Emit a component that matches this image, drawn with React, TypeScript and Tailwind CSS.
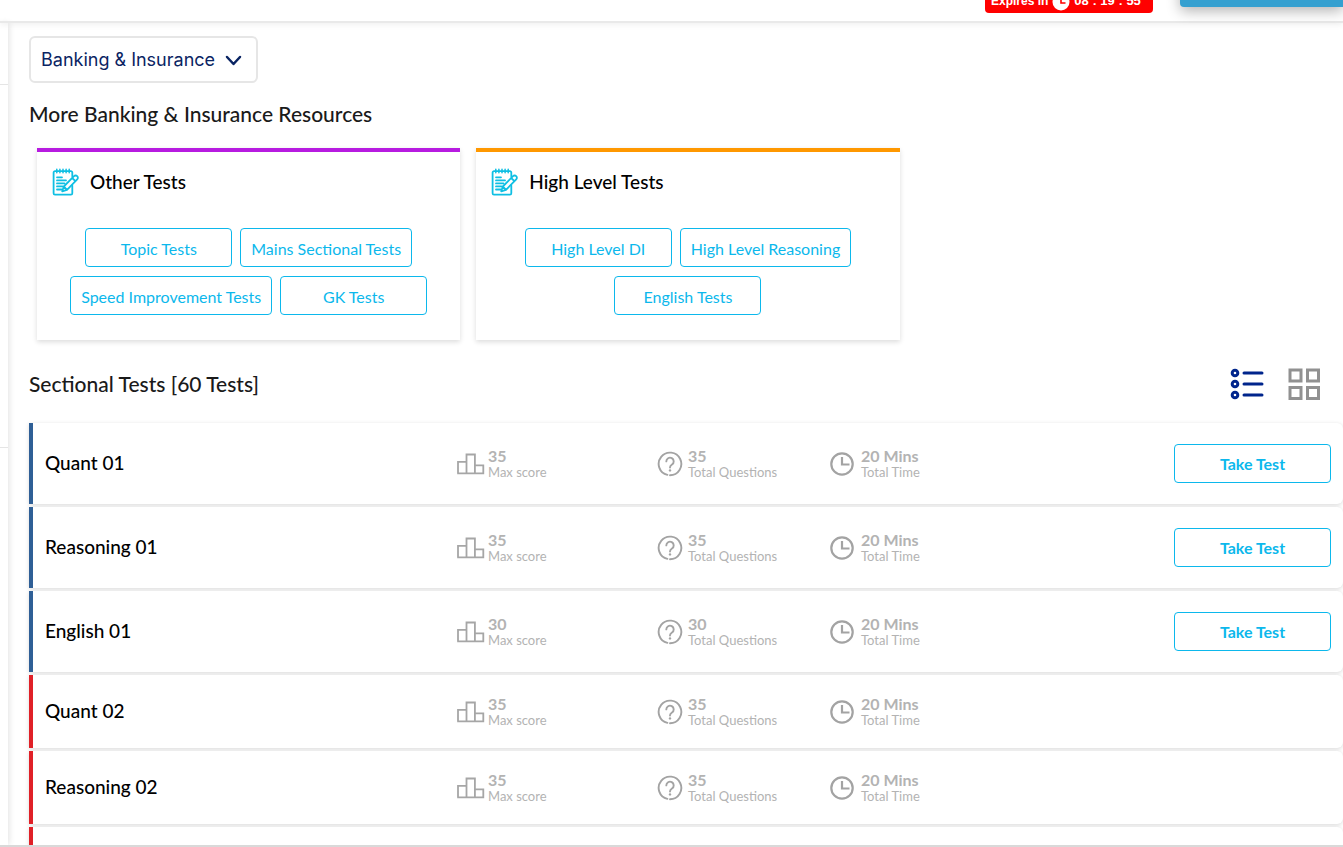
import { useState } from "react";

type Test = {
  title: string;
  score: number;
  questions: number;
  mins: number;
  open: boolean;
};

const resources = [
  {
    title: "Other Tests",
    border: "border-[#b71be0]",
    links: ["Topic Tests", "Mains Sectional Tests", "Speed Improvement Tests", "GK Tests"],
  },
  {
    title: "High Level Tests",
    border: "border-[#ff9800]",
    links: ["High Level DI", "High Level Reasoning", "English Tests"],
  },
];

const tests: Test[] = [
  { title: "Quant 01", score: 35, questions: 35, mins: 20, open: true },
  { title: "Reasoning 01", score: 35, questions: 35, mins: 20, open: true },
  { title: "English 01", score: 30, questions: 30, mins: 20, open: true },
  { title: "Quant 02", score: 35, questions: 35, mins: 20, open: false },
  { title: "Reasoning 02", score: 35, questions: 35, mins: 20, open: false },
];

const NotepadIcon = () => (
  <svg width="28" height="28" viewBox="0 0 28 28" fill="none" stroke="#0fbfe3" strokeWidth="1.8" strokeLinecap="round" strokeLinejoin="round">
    <path d="M20.3 8.5V4.6a1.4 1.4 0 0 0-1.4-1.4H3a1.4 1.4 0 0 0-1.4 1.4v20.6A1.4 1.4 0 0 0 3 26.6h15.9a1.4 1.4 0 0 0 1.4-1.400V17.5" />
    <path d="M4.8 1.2v3.6M7.9 1.2v3.6M11 1.2v3.6M14.1 1.2v3.6M17.2 1.2v3.6" strokeWidth="1.5" />
    <path d="M5 9.3h5M5 12.4h9M5 15.4h7.5M5 18.400h5.5M5 21.5h4.5" />
    <path d="M11.8 18.5 22 8.2a2.2 2.2 0 0 1 3.2 0 2.2 2.2 0 0 1 0 3.2L15 21.8l-4.8 1.5zM20.2 10l3.2 3.2M11.8 18.5l3.2 3.3" />
  </svg>
);

const ScoreIcon = () => (
  <svg width="28" height="22" viewBox="0 0 28 22" fill="none" stroke="#a6a6a6" strokeWidth="1.8">
    <path d="M1 20.3V8.8h8.5M9.5 20.3V1.5h8.4v18.8M17.9 12.3h8.4v8M.2 20.3h27" />
  </svg>
);

const QuestionIcon = () => (
  <svg width="26" height="26" viewBox="0 0 26 26" fill="none" stroke="#a3a3a3" strokeWidth="1.9" strokeLinecap="round">
    <path d="M10.4 23.9A11.3 11.3 0 1 1 13 24.2" />
    <path d="M9.3 10.4a3.7 3.7 0 1 1 5.7 3.1c-1.4.9-2 1.5-2 3" />
    <circle cx="13" cy="19.4" r="1.2" fill="#a3a3a3" stroke="none" />
  </svg>
);

const ClockIcon = () => (
  <svg width="24" height="24" viewBox="0 0 24 24" fill="none" stroke="#a3a3a3" strokeWidth="2.2">
    <circle cx="12" cy="12" r="10.7" />
    <path d="M12 5v7.500h7.500" />
  </svg>
);

const Stat = ({ icon, value, label }: { icon: React.ReactNode; value: string; label: string }) => (
  <div className="flex items-center">
    <span className="w-[31px] shrink-0 flex items-center">{icon}</span>
    <div className="text-[#b3b3b3]">
      <div className="text-base leading-4 font-bold">{value}</div>
      <div className="text-[13px] leading-4">{label}</div>
    </div>
  </div>
);

const TestRow = ({ test }: { test: Test }) => (
  <li
    className={`grid grid-cols-[412fr_200fr_173fr_344fr_157px] items-center rounded-r-md border-l-4 bg-white px-3 shadow-[0_1px_4px_rgba(0,0,0,0.15)] ${test.open ? "border-[#2f5f96] py-[21px]" : "border-[#e02027] h-[73px]"}`}
  >
    <h3 className="pb-0.5 text-[19px] leading-6 font-medium text-black">{test.title}</h3>
    <Stat icon={<ScoreIcon />} value={`${test.score}`} label="Max score" />
    <Stat icon={<QuestionIcon />} value={`${test.questions}`} label="Total Questions" />
    <Stat icon={<ClockIcon />} value={`${test.mins} Mins`} label="Total Time" />
    {test.open && (
      <button className="h-[39px] rounded-sm border border-[#0cb8ec] text-base font-bold text-[#0cb8ec]">
        Take Test
      </button>
    )}
  </li>
);

const App = () => {
  const [view, setView] = useState("list");

  return (
    <div className="flex h-screen flex-col overflow-hidden border-b-2 border-[#d9d9d9] bg-white font-['Lato',sans-serif]">
      <header className="z-10 flex h-[23px] shrink-0 items-end justify-end border-b-2 border-[#e9e9e9] shadow-[0_2px_6px_rgba(0,0,0,0.06)]">
        <div className="mb-2 mr-[27px] flex h-8 w-[168px] items-end gap-1 whitespace-nowrap rounded-sm bg-[#ff0000] px-[6px] pb-1 font-['Liberation_Sans',sans-serif] text-[13px] font-bold leading-4 text-white">
          <span className="text-xs leading-4">Expires in</span>
          <svg width="18" height="18" viewBox="0 0 18 18" className="-mb-0.5 shrink-0">
            <circle cx="9" cy="9" r="8.5" fill="white" />
            <path d="M9 4v6h4.5" fill="none" stroke="#ff0000" strokeWidth="1.6" />
          </svg>
          <span>08 : 19 : 55</span>
        </div>
        <button aria-label="Upgrade" className="mb-[14px] h-10 w-[163px] rounded-bl-sm bg-[#35a0d0] shadow-[0_4px_14px_rgba(0,0,0,0.3)]" />
      </header>

      <div className="flex min-h-0 flex-1">
        <aside className="w-2 shrink-0 shadow-[1px_0_6px_rgba(0,0,0,0.12)]">
          <div className="h-[62px] border-b border-[#e5e5e5]" />
          <div className="h-[363px] border-b border-[#e5e5e5]" />
        </aside>

        <main className="min-w-0 flex-1 pl-[21px] pt-[13px]">
          <div className="relative w-fit">
            <select
              aria-label="Exam category"
              className="h-[47px] w-[229px] appearance-none rounded-md border-2 border-[#e6e6e6] bg-white pl-[10px] font-['Inter',sans-serif] text-lg text-[#0a2463]"
            >
              <option>Banking &amp; Insurance</option>
            </select>
            <svg className="pointer-events-none absolute right-4 top-[19px]" width="17" height="12" viewBox="0 0 17 12" fill="none" stroke="#0a2463" strokeWidth="2.5" strokeLinecap="round" strokeLinejoin="round">
              <path d="m2 2 6.5 7L15 2" />
            </svg>
          </div>

          <h2 className="mt-[17px] text-[21px] leading-7 font-medium text-[#1a1a1a]">
            More Banking &amp; Insurance Resources
          </h2>

          <div className="mt-5 grid grid-cols-3 gap-4 pl-2 pr-1">
            {resources.map((item) => (
              <section key={item.title} className={`border-t-4 bg-white pb-[25px] pt-4 shadow-[0_2px_5px_rgba(0,0,0,0.14)] ${item.border}`}>
                <div className="flex items-center gap-[10px] px-[15px]">
                  <NotepadIcon />
                  <h3 className="text-[19px] leading-7 font-medium text-black">{item.title}</h3>
                </div>
                <div className="mt-8 flex flex-wrap justify-center gap-x-2 gap-y-[9px] px-4">
                  {item.links.map((link) => (
                    <button key={link} className="h-[39px] min-w-[147px] rounded-sm border border-[#0cb8ec] px-[10px] pt-0.5 text-base text-[#0cb8ec]">
                      {link}
                    </button>
                  ))}
                </div>
              </section>
            ))}
          </div>

          <div className="mt-7 flex items-center justify-between pr-[23px]">
            <h2 className="text-[21px] leading-8 font-medium text-[#1a1a1a]">Sectional Tests [60 Tests]</h2>
            <div className="flex items-center gap-6">
              <button aria-label="List view" aria-pressed={view === "list"} onClick={() => setView("list")}>
                <svg width="34" height="32" viewBox="0 0 34 32" fill="none" stroke="#00258c" strokeWidth="3" strokeLinecap="round">
                  <circle cx="5" cy="5" r="2.8" />
                  <circle cx="5" cy="16" r="2.8" />
                  <circle cx="5" cy="27" r="2.8" />
                  <path d="M14 5h18M14 16h18M14 27h18" />
                </svg>
              </button>
              <button aria-label="Grid view" aria-pressed={view === "grid"} onClick={() => setView("grid")}>
                <svg width="32" height="32" viewBox="0 0 32 32" fill="none" stroke="#919191" strokeWidth="3">
                  <path d="M2 2h11v11H2zM19.5 2h11v11h-11zM2 19.5h11v11H2zM19.5 19.5h11v11h-11z" />
                </svg>
              </button>
            </div>
          </div>

          <ul className="mt-[23px] flex flex-col gap-[3px]">
            {tests.map((test) => (
              <TestRow key={test.title} test={test} />
            ))}
            {/* next row, only its top edge is in view */}
            <li className="h-[73px] rounded-r-md border-l-4 border-[#e02027] bg-white shadow-[0_1px_4px_rgba(0,0,0,0.15)]" />
          </ul>
        </main>
      </div>
    </div>
  );
};

export default App;
